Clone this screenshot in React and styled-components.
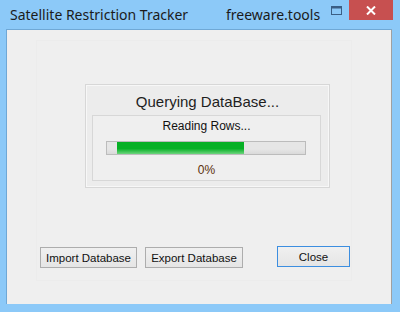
import styled, { createGlobalStyle } from "styled-components";

const Global = createGlobalStyle`
  html, body {
    margin: 0;
    padding: 0;
    background: #8cc9f8;
  }
`;

const App = () => {
  return (
    <Window>
      <Global />
      <TitleBar>
        <Title>Satellite Restriction Tracker</Title>
        <Brand>freeware.tools</Brand>
        <MaxButton>
          <svg width="11" height="9" viewBox="0 0 11 9">
            <rect x="0.5" y="0.5" width="10" height="8" fill="none" stroke="#3b5f85" />
            <rect x="0.5" y="0.5" width="10" height="2" fill="#3b5f85" />
          </svg>
        </MaxButton>
        <CloseX>
          <svg width="10" height="9" viewBox="0 0 10 9">
            <path d="M1 0.5 L9 8.5 M9 0.5 L1 8.5" stroke="#fff" strokeWidth="2" />
          </svg>
        </CloseX>
      </TitleBar>
      <Client>
        <Backdrop />
        <GroupBox>
          <GroupTitle>Querying DataBase...</GroupTitle>
          <InnerBox>
            <Status>Reading Rows...</Status>
            <Progress>
              <Fill style={{ width: `${(127 / 188) * 100}%` }} />
            </Progress>
            <Percent>0%</Percent>
          </InnerBox>
        </GroupBox>
        <Buttons>
          <Button $w={97}>Import Database</Button>
          <Button $w={98}>Export Database</Button>
          <Button $w={73} $default>Close</Button>
        </Buttons>
      </Client>
    </Window>
  );
};

export default App;

const Window = styled.div`
  width: 400px;
  height: 312px;
  background: #8cc9f8;
  display: flex;
  flex-direction: column;
  font-family: "Liberation Sans", Arial, sans-serif;
  overflow: hidden;
`;

const TitleBar = styled.div`
  height: 29px;
  display: flex;
  align-items: flex-start;
  position: relative;
  font-family: "Noto Sans", "Open Sans", sans-serif;
`;

const Title = styled.div`
  margin: 5px 0 0 10px;
  font-size: 14px;
  color: #1b1b1b;
  width: 216px;
  white-space: nowrap;
`;

const Brand = styled.div`
  margin-top: 5px;
  font-size: 14px;
  color: #1b1b1b;
  white-space: nowrap;
`;

const MaxButton = styled.div`
  position: absolute;
  left: 331px;
  top: 6px;
  display: flex;
`;

const CloseX = styled.div`
  position: absolute;
  left: 349px;
  top: 0;
  width: 44px;
  height: 20px;
  background: #c75050;
  display: flex;
  align-items: center;
  justify-content: center;
`;

const Client = styled.div`
  margin-left: 6px;
  width: 386px;
  height: 275px;
  border-left: 1px solid #6fa8d6;
  border-top: 1px solid #6fa8d6;
  border-right: 1px solid #a0a0a0;
  background: #efefef;
  box-sizing: border-box;
  position: relative;
  display: flex;
  flex-direction: column;
`;

const Backdrop = styled.div`
  position: absolute;
  left: 29px;
  top: 10px;
  width: 316px;
  height: 241px;
  border: 1px solid #ececec;
  box-sizing: border-box;
`;

const GroupBox = styled.div`
  position: relative;
  margin: 54px 0 0 78px;
  width: 245px;
  height: 104px;
  box-sizing: border-box;
  border: 1px solid #d7d7d7;
  outline: 1px solid #f7f7f7;
  outline-offset: -2px;
  background: #ececec;
  display: flex;
  flex-direction: column;
  align-items: center;
`;

const GroupTitle = styled.div`
  margin-top: 7px;
  font-size: 15px;
  line-height: 20px;
  color: #1e1e1e;
  height: 22px;
`;

const InnerBox = styled.div`
  margin-top: 1px;
  align-self: flex-start;
  margin-left: 6px;
  width: 229px;
  height: 66px;
  box-sizing: border-box;
  border: 1px solid #d7d7d7;
  background: #efefef;
  display: flex;
  flex-direction: column;
  align-items: center;
`;

const Status = styled.div`
  margin-top: 1px;
  font-size: 12px;
  line-height: 18px;
  color: #111;
  height: 18px;
`;

const Progress = styled.div`
  margin-top: 6px;
  align-self: flex-start;
  margin-left: 13px;
  width: 200px;
  height: 14px;
  box-sizing: border-box;
  border: 1px solid #bcbcbc;
  background: linear-gradient(#e6e6e6, #e6e6e6 60%, #dadada);
  padding: 0 0 0 10px;
  display: flex;
`;

const Fill = styled.div`
  height: 100%;
  background: linear-gradient(#06b025, #06b025 55%, #3fc456 80%, #6dd57e);
`;

const Percent = styled.div`
  margin-top: 7px;
  font-size: 12px;
  line-height: 16px;
  color: #5a2e0a;
`;

const Buttons = styled.div`
  margin: 59px 0 0 33px;
  display: flex;
  align-items: flex-start;
  gap: 8px;

  & > :last-child {
    margin: -1px 0 0 26px;
  }
`;

const Button = styled.button`
  width: ${(p) => p.$w}px;
  height: 21px;
  padding: 0;
  box-sizing: border-box;
  font-family: "Liberation Sans", Arial, sans-serif;
  font-size: 11.5px;
  color: #111;
  background: linear-gradient(#f0f0f0, #e5e5e5);
  border: 1px solid ${(p) => (p.$default ? "#3c8ee0" : "#adadad")};
  border-radius: 0;
`;
